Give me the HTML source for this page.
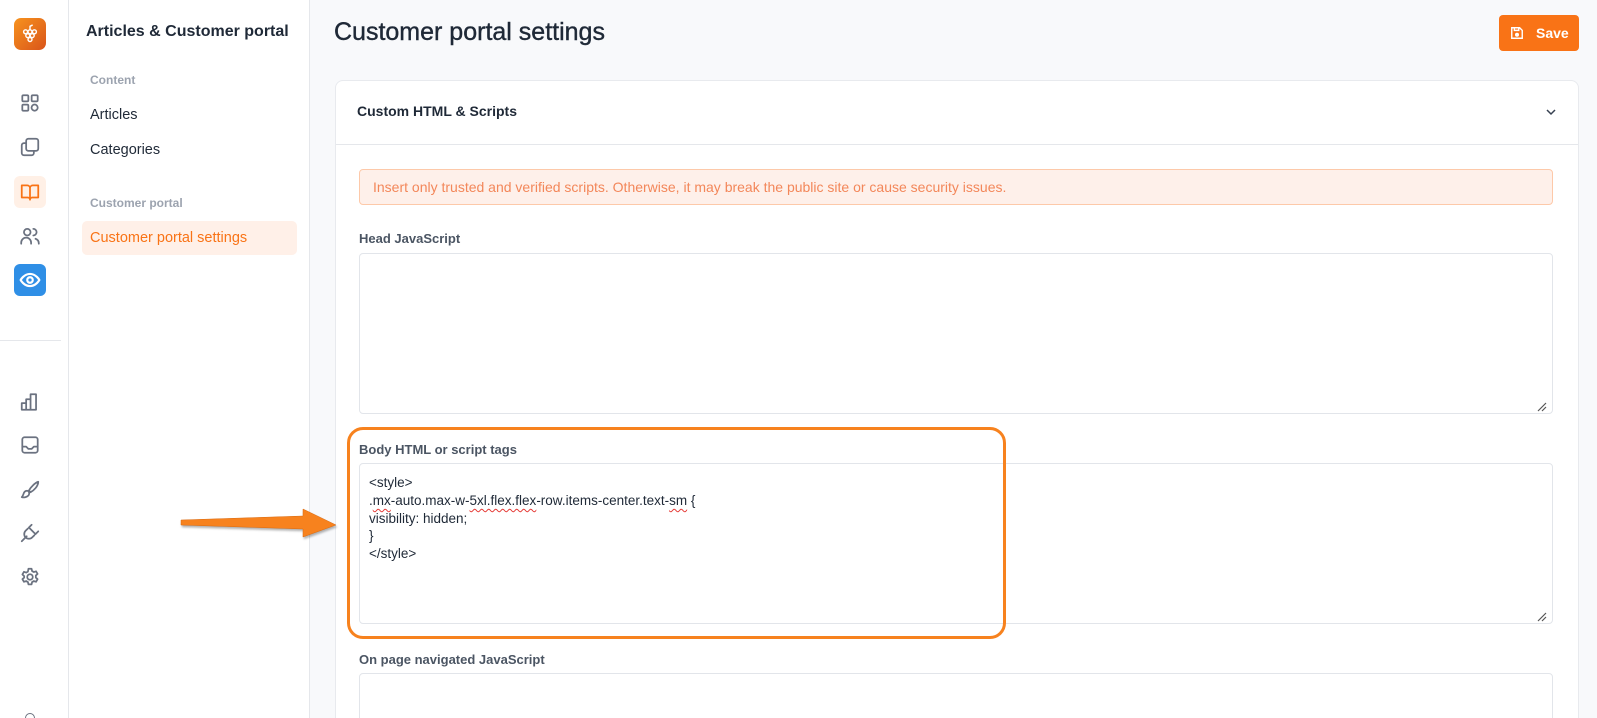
<!DOCTYPE html>
<html><head><meta charset="utf-8"><style>
*{box-sizing:border-box;margin:0;padding:0}
html{width:1597px;height:718px;overflow:hidden}
body{width:1597px;height:718px;overflow:hidden;font-family:"Liberation Sans",sans-serif;background:#f8f9fb;position:relative;color:#1f2937}
.rail{position:absolute;left:0;top:0;width:69px;height:718px;background:#fff;border-right:1px solid #e5e7eb}
.side{position:absolute;left:69px;top:0;width:241px;height:718px;background:#fff;border-right:1px solid #e5e7eb}
.ic{position:absolute;left:14px;width:32px;height:32px;display:flex;align-items:center;justify-content:center;border-radius:6px}
.ic svg{width:22px;height:22px;fill:none;stroke:#6b7280;stroke-width:1.6;stroke-linecap:round;stroke-linejoin:round}
.abs{position:absolute}
.card{position:absolute;left:335px;top:80px;width:1244px;height:650px;background:#fff;border:1px solid #e8eaee;border-radius:8px}
.ta{position:absolute;left:359px;width:1194px;background:#fff;border:1px solid #e2e5ea;border-radius:4px}
.lbl{position:absolute;left:359px;font-size:13px;font-weight:bold;color:#4b5563}
.sq{text-decoration:underline wavy #e53935;text-decoration-thickness:1px;text-underline-offset:3px}
</style></head><body>
<div class="rail">
  <div class="ic" style="top:18px;background:linear-gradient(135deg,#f7931e,#d9541a);border-radius:7px">
    <svg viewBox="0 0 20 20" style="stroke:#fff;stroke-width:1.3"><circle cx="6" cy="8" r="1.8"/><circle cx="10" cy="8" r="1.8"/><circle cx="14" cy="8" r="1.8"/><circle cx="8" cy="11.5" r="1.8"/><circle cx="12" cy="11.5" r="1.8"/><circle cx="10" cy="15" r="1.8"/><path d="M10 6V3l2-1"/></svg></div>
  <div class="ic" style="top:87px"><svg viewBox="0 0 20 20"><rect x="3" y="3" width="5.5" height="5.5" rx="1"/><rect x="11.5" y="3" width="5.5" height="5.5" rx="1"/><rect x="3" y="11.5" width="5.5" height="5.5" rx="1"/><circle cx="14.2" cy="14.2" r="2.8"/></svg></div>
  <div class="ic" style="top:131px"><svg viewBox="0 0 20 20"><rect x="6.5" y="2.5" width="11" height="11" rx="2"/><path d="M13.5 13.5v2a2 2 0 0 1-2 2h-7a2 2 0 0 1-2-2v-7a2 2 0 0 1 2-2h2"/></svg></div>
  <div class="ic" style="top:176px;background:#fff0e6"><svg viewBox="0 0 20 20" style="stroke:#f97316"><path d="M2.5 4h5a2.5 2.5 0 0 1 2.5 2.5V17a2 2 0 0 0-2-2H2.5zM17.5 4h-5A2.5 2.5 0 0 0 10 6.5V17a2 2 0 0 1 2-2h5.5z"/></svg></div>
  <div class="ic" style="top:220px"><svg viewBox="0 0 20 20"><circle cx="7.5" cy="6.5" r="3"/><path d="M2 17v-1a4.5 4.5 0 0 1 9 0v1M13 3.5a3 3 0 0 1 0 6M15 12.5a4.5 4.5 0 0 1 3 4.2V17"/></svg></div>
  <div class="ic" style="top:264px;background:#2f8fe6"><svg viewBox="0 0 20 20" style="stroke:#fff;stroke-width:2"><path d="M1.5 10S4.5 4.5 10 4.5 18.5 10 18.5 10 15.5 15.5 10 15.5 1.5 10 1.5 10z"/><circle cx="10" cy="10" r="2.5"/></svg></div>
  <div class="abs" style="left:0;top:340px;width:61px;height:1px;background:#e5e7eb"></div>
  <div class="ic" style="top:386px"><svg viewBox="0 0 20 20"><path d="M2.5 17V11h4v6M6.5 17V7.5h4V17M10.5 17V3h5v14zM2.5 17h13"/></svg></div>
  <div class="ic" style="top:429px"><svg viewBox="0 0 20 20"><rect x="3" y="3" width="14" height="14" rx="2"/><path d="M3 11.5h3.5l2 2h3l2-2H17"/></svg></div>
  <div class="ic" style="top:474px"><svg viewBox="0 0 20 20"><path d="M17.5 2.5c-3 1-7 5-8.5 8l1.5 1.5c3-1.5 7-5.5 7-9.5zM8.5 11a3 3 0 0 0-4 1.5c-.5 1.5-1 3-2 4 2 .5 4.5 0 5.5-1a3 3 0 0 0 .5-4.5z"/></svg></div>
  <div class="ic" style="top:517px"><svg viewBox="0 0 20 20"><path d="M9 5l6 6M11.5 2.5l-2.5 2.5M17.5 8.5 15 11M8 6l-2 2a4 4 0 0 0 6 6l2-2M7 13l-4.5 4.5"/></svg></div>
  <div class="ic" style="top:561px"><svg viewBox="0 0 20 20"><circle cx="10" cy="10" r="2.5"/><path d="M8.6 2.5h2.8l.5 2.1 1.6.9 2-.7 1.4 2.4-1.6 1.5v1.8l1.6 1.5-1.4 2.4-2-.7-1.6.9-.5 2.1H8.6l-.5-2.1-1.6-.9-2 .7-1.4-2.4 1.6-1.5V9.2L3.1 7.7l1.4-2.4 2 .7 1.6-.9z"/></svg></div>
  <div class="abs" style="left:25px;top:713px;width:10px;height:10px;border:1.7px solid #6b7280;border-radius:50%"></div>
</div>
<div class="side">
  <div class="abs" style="left:17px;top:23px;font-size:16px;font-weight:bold;color:#1f2937;white-space:nowrap">Articles &amp; Customer portal</div>
  <div class="abs" style="left:21px;top:73px;font-size:12px;font-weight:bold;color:#9ca3af">Content</div>
  <div class="abs" style="left:21px;top:107px;font-size:14.5px;color:#1f2937">Articles</div>
  <div class="abs" style="left:21px;top:142px;font-size:14.5px;color:#1f2937">Categories</div>
  <div class="abs" style="left:21px;top:196px;font-size:12px;font-weight:bold;color:#9ca3af">Customer portal</div>
  <div class="abs" style="left:13px;top:221px;width:215px;height:34px;background:#fff0e8;border-radius:5px;font-size:14.5px;color:#f97316;padding:9px 0 0 8px">Customer portal settings</div>
</div>
<div class="abs" style="left:334px;top:18px;font-size:25px;color:#1f2937;-webkit-text-stroke:0.4px #1f2937">Customer portal settings</div>
<div class="abs" style="left:1499px;top:15px;width:80px;height:36px;background:#f97316;border-radius:4px;color:#fff;font-weight:bold;font-size:14px;display:flex;align-items:center;padding-left:11px">
  <svg viewBox="0 0 16 16" width="14" height="14" style="fill:none;stroke:#fff;stroke-width:1.6"><path d="M2 2h9l3 3v9H2z"/><path d="M5 2v3h5V2"/><circle cx="8" cy="10" r="1.5" fill="#fff"/></svg>
  <span style="margin-left:12px">Save</span></div>
<div class="card">
  <div class="abs" style="left:21px;top:22px;font-size:14px;font-weight:bold;color:#1f2937">Custom HTML &amp; Scripts</div>
  <svg class="abs" style="left:1209px;top:25px" width="12" height="12" viewBox="0 0 12 12"><path d="M2 4l4 4 4-4" fill="none" stroke="#374151" stroke-width="1.5"/></svg>
  <div class="abs" style="left:0;top:63px;width:1242px;height:1px;background:#e5e7eb"></div>
</div>
<div class="abs" style="left:359px;top:169px;width:1194px;height:36px;background:#fef0ea;border:1px solid #fdc9a9;border-radius:4px;font-size:14px;color:#f3875a;padding:9px 0 0 13px">Insert only trusted and verified scripts. Otherwise, it may break the public site or cause security issues.</div>
<div class="lbl" style="top:231px">Head JavaScript</div>
<div class="ta" style="top:253px;height:161px"></div>
<div class="lbl" style="top:442px">Body HTML or script tags</div>
<div class="ta" style="top:463px;height:161px;font-size:13.5px;line-height:17.8px;color:#1f2937;padding:10px 0 0 9px;white-space:pre">&lt;style&gt;
.<span class="sq">mx</span>-auto.max-w-<span class="sq">5xl.flex.flex</span>-row.items-center.text-<span class="sq">sm</span> {
visibility: hidden;
}
&lt;/style&gt;</div>
<div class="lbl" style="top:652px">On page navigated JavaScript</div>
<div class="ta" style="top:673px;height:60px"></div>
<svg class="abs" style="left:1536px;top:401px" width="12" height="12" viewBox="0 0 12 12"><path d="M2 10 10 2M6 10l4-4" stroke="#555" stroke-width="1.2"/></svg>
<svg class="abs" style="left:1536px;top:611px" width="12" height="12" viewBox="0 0 12 12"><path d="M2 10 10 2M6 10l4-4" stroke="#555" stroke-width="1.2"/></svg>
<div class="abs" style="left:347px;top:427px;width:659px;height:212px;border:3px solid #f7821e;border-radius:16px"></div>
<svg class="abs" style="left:170px;top:505px" width="175" height="40" viewBox="0 0 175 40">
  <path d="M11 15 L133 11 L133 4 L166 20 L133 32 L133 24 L11 20 Z" fill="#f7821e" stroke="#d96a10" stroke-width="0.5" style="filter:drop-shadow(1px 2px 1px rgba(0,0,0,.3))"/>
</svg>
</body></html>
